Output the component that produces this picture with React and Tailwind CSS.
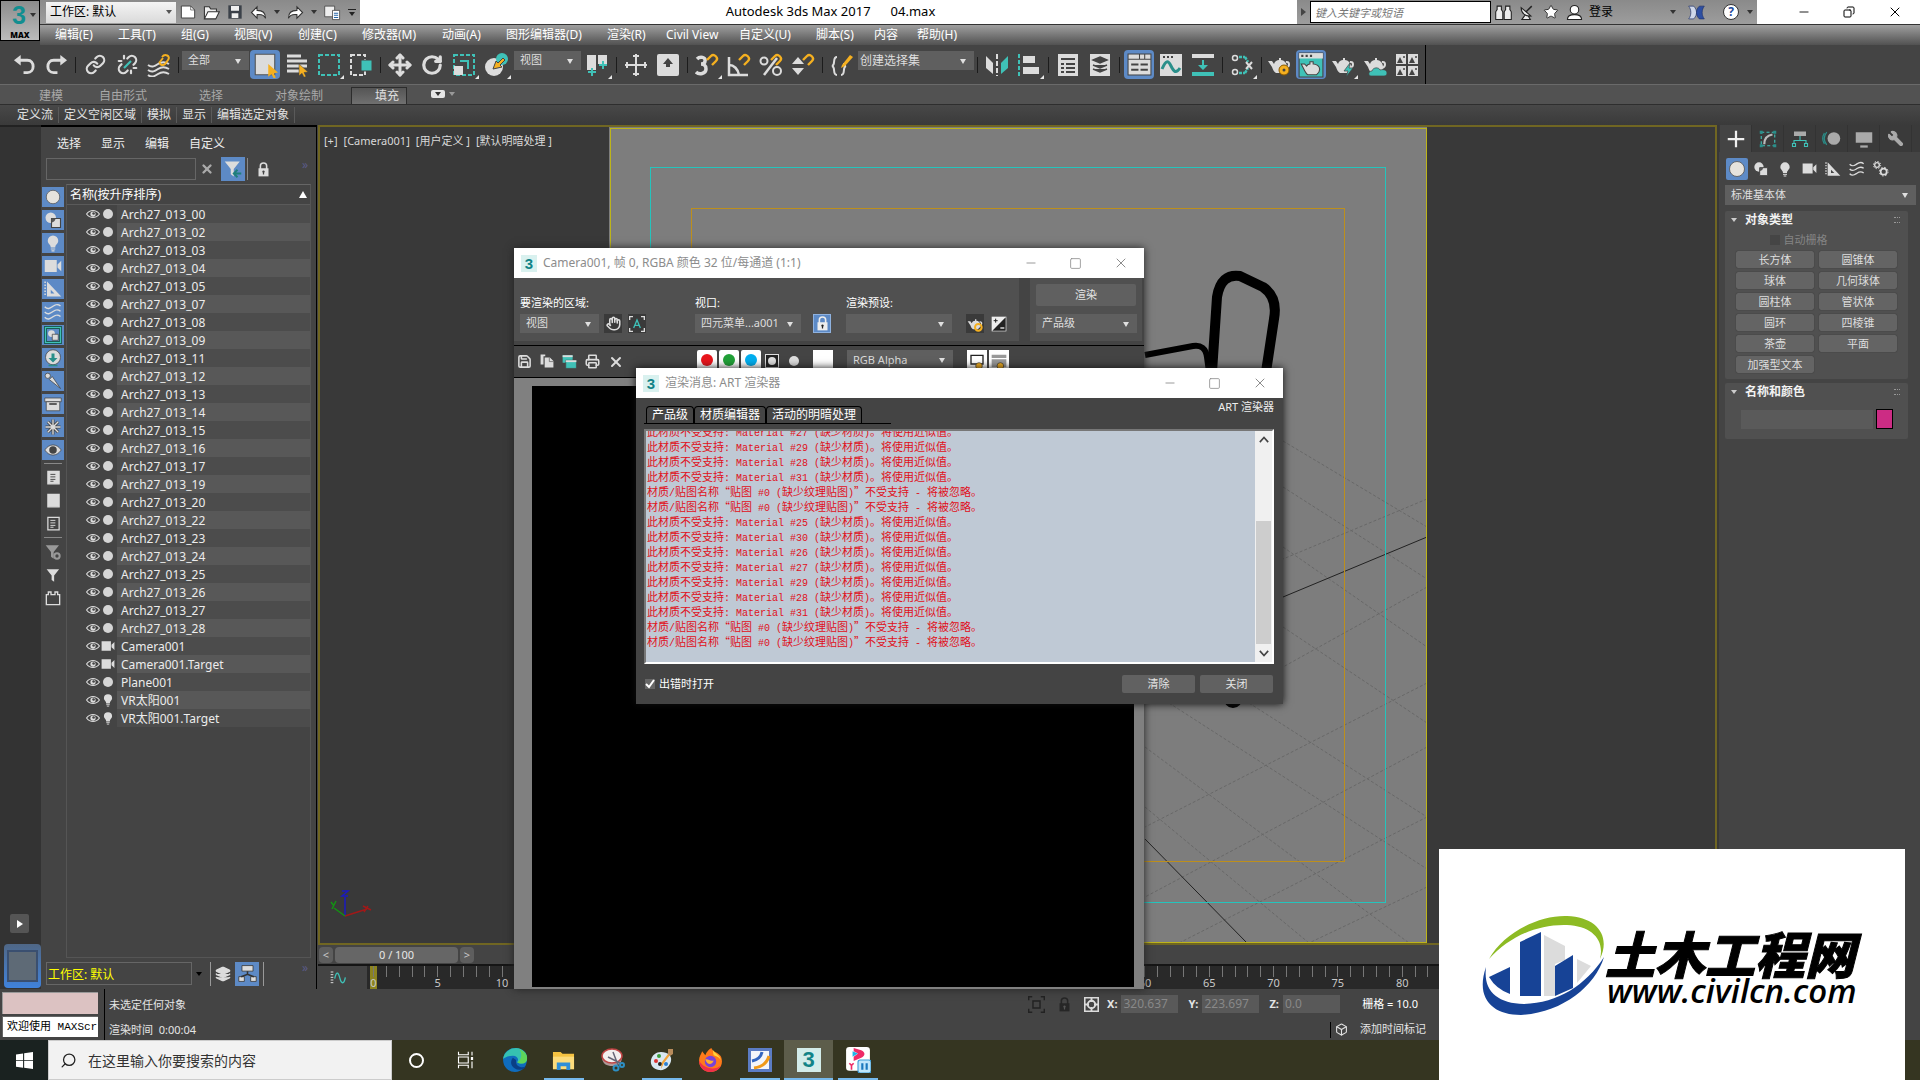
import React from 'react';
import { Link, Unlink, Move, RotateCw, Search, Star, Wrench, Layers, Hand, Save, Printer, Copy, X, Square, Minus, Box } from 'lucide-react';
import clsx from 'clsx';

const MENUS = [
  ['编辑(E)', 'w-[63px]'], ['工具(T)', 'w-[63px]'], ['组(G)', 'w-[53px]'], ['视图(V)', 'w-[64px]'],
  ['创建(C)', 'w-[64px]'], ['修改器(M)', 'w-[80px]'], ['动画(A)', 'w-[64px]'], ['图形编辑器(D)', 'w-[101px]'],
  ['渲染(R)', 'w-[59px]'], ['Civil View', 'w-[73px]'], ['自定义(U)', 'w-[77px]'], ['脚本(S)', 'w-[58px]'],
  ['内容', 'w-[43px]'], ['帮助(H)', 'w-[60px]'],
];

const OBJECTS = [
  ...['00', '02', '03', '04', '05', '07', '08', '09', '11', '12', '13', '14', '15', '16', '17', '19', '20', '22', '23', '24', '25', '26', '27', '28']
    .map((n) => ({ name: `Arch27_013_${n}`, kind: 'mesh' })),
  { name: 'Camera001', kind: 'camera' },
  { name: 'Camera001.Target', kind: 'camera' },
  { name: 'Plane001', kind: 'mesh' },
  { name: 'VR太阳001', kind: 'light' },
  { name: 'VR太阳001.Target', kind: 'light' },
];

const material = (n) => `此材质不受支持: Material #${n} (缺少材质)。将使用近似值。`;
const MAP = '材质/贴图名称“贴图 #0 (缺少纹理贴图)”不受支持 - 将被忽略。';
const LOG = [
  material(27), material(29), material(28), material(31), MAP, MAP,
  material(25), material(30), material(26), material(27), material(29), material(28), material(31), MAP, MAP,
];

const PRIMITIVES = ['长方体', '圆锥体', '球体', '几何球体', '圆柱体', '管状体', '圆环', '四棱锥', '茶壶', '平面', '加强型文本'];

const L = '#dcdcdc';
const T = '#3fc1b7';
const A = '#f5b020';

function Svg({ size = 24, children }) {
  return (
    <svg width={size} height={size} viewBox="0 0 24 24" fill="none" className="shrink-0">
      {children}
    </svg>
  );
}

/* ---------- small building blocks ---------- */

function Tool({ label, on, corner, children }) {
  return (
    <span className="flex w-8 shrink-0 justify-center">
      <button
        aria-label={label}
        className={clsx('relative flex h-[29px] w-[30px] items-center justify-center rounded-sm', on && 'bg-[#5d8ac6]')}
      >
        {children}
        {corner && <i className="absolute right-0 bottom-0 border-2 border-transparent border-r-[#e8e8e8] border-b-[#e8e8e8]" />}
      </button>
    </span>
  );
}

function Sep() {
  return (
    <span className="flex w-[7px] shrink-0 justify-center">
      <i className="h-4 w-px bg-[#1c1c1c]" />
    </span>
  );
}

function Select({ label, value, className, textClass = 'text-[11px]' }) {
  return (
    <span className={clsx('relative flex shrink-0 bg-[#5f5f5f]', className)}>
      <select aria-label={label} className={clsx('h-full w-full appearance-none bg-transparent px-1.5 text-[#dedede] outline-none', textClass)}>
        <option>{value}</option>
      </select>
      <i className="pointer-events-none absolute top-1/2 right-2 -mt-0.5 border-x-[3px] border-t-[5px] border-x-transparent border-t-[#e0e0e0]" />
    </span>
  );
}

function Down({ className = 'border-t-[#333]' }) {
  return <i className={clsx('shrink-0 border-x-[3px] border-t-[4px] border-x-transparent', className)} />;
}

function MaxMark() {
  return (
    <span className="flex h-[17px] w-4 items-center justify-center bg-[#d9f1ef] font-['Liberation_Sans',sans-serif] text-[15px] leading-none font-bold text-[#128387]">3</span>
  );
}

function WindowTitle({ title }) {
  return (
    <div className="flex h-[30px] items-center bg-white pl-[7px] text-[12px] text-[#8c8c8c]">
      <MaxMark />
      <span className="ml-1.5 flex-1 whitespace-nowrap">{title}</span>
      <button aria-label="最小化" className="flex w-[45px] justify-center"><Minus size={14} strokeWidth={1.5} /></button>
      <button aria-label="最大化" className="flex w-[45px] justify-center"><Square size={13} strokeWidth={1.5} /></button>
      <button aria-label="关闭窗口" className="flex w-[46px] justify-center"><X size={16} strokeWidth={1.5} /></button>
    </div>
  );
}

/* ---------- icons ---------- */

const Teapot = ({ children, size = 24 }) => (
  <Svg size={size}>
    <path d="M1 8h4l2 3c1-3 3-4 5-4V5h2v2c3 0 6 3 6 7 0 3-2 5-4 6H9c-2-1-3-3-4-6z" fill={L} />
    <path d="M19 9c4-1 4 5 0 6" stroke={L} strokeWidth="2" />
    {children}
  </Svg>
);

const Magnet = () => <path d="M12 7l4-4c3-3 8 2 5 5l-4 4" stroke={A} strokeWidth="2.4" />;

const Padlock = ({ size = 16, fill = L, hole = '#444' }) => (
  <Svg size={size}>
    <path d="M7 11V6c0-6 10-6 10 0v5" stroke={fill} strokeWidth="2.500" />
    <path d="M4 10h16v13H4z" fill={fill} />
    <path d="M12 13.500a2 2 0 0 1 1 3.700V20h-2v-2.800a2 2 0 0 1 1-3.700z" fill={hole} />
  </Svg>
);
const Shapes = ({ size = 18 }) => (
  <Svg size={size}>
    <circle cx="9" cy="9" r="7" fill={L} />
    <path d="M10 10h12v12H10z" fill={L} stroke="#444" strokeWidth="1.500" />
    <path d="M10 15.500V10h5.500a7 7 0 0 1-5.500 5.500z" fill="#555" />
  </Svg>
);
const Bulb = ({ size = 18 }) => (
  <Svg size={size}>
    <path d="M12 2a7 7 0 0 1 7 7c0 4-4 5-4 9H9c0-4-4-5-4-9a7 7 0 0 1 7-7z" fill={L} />
    <path d="M9 20h6M10 22.500h4" stroke={L} strokeWidth="1.500" />
  </Svg>
);
const Camera = ({ size = 18 }) => (
  <Svg size={size}>
    <path d="M1 4h16v16H1zM18 10l5-5v14l-5-5z" fill={L} />
  </Svg>
);
const Ruler = ({ size = 18 }) => (
  <Svg size={size}>
    <path fillRule="evenodd" d="M4 2l19 20H4zM9 13v5h5z" fill={L} />
    <path d="M1.500 2v20" stroke={L} strokeWidth="2" strokeDasharray="2 2" />
  </Svg>
);
const Waves = ({ size = 18 }) => (
  <Svg size={size}>
    {[5, 12, 19].map((y) => (
      <path key={y} d={`M1 ${y}c4 4 7 2 10 0s6-5 11-1`} stroke={L} strokeWidth="2" />
    ))}
  </Svg>
);
const Gears = ({ size = 18 }) => (
  <Svg size={size}>
    <circle cx="6" cy="6" r="3.500" stroke={L} strokeWidth="2" />
    <circle cx="6" cy="6" r="5.500" stroke={L} strokeWidth="1.500" strokeDasharray="2 2.300" />
    <circle cx="16" cy="16" r="4.500" stroke={L} strokeWidth="2.500" />
    <circle cx="16" cy="16" r="6.500" stroke={L} strokeWidth="1.500" strokeDasharray="2.500 2.600" />
  </Svg>
);
const Dot = ({ size = 18 }) => (
  <Svg size={size}>
    <circle cx="12" cy="12" r="9" fill="#e6e3dd" stroke="#555" />
  </Svg>
);
const Eye = ({ size = 14 }) => (
  <Svg size={size}>
    <path d="M1 12c6-8 16-8 22 0-6 8-16 8-22 0z" stroke={L} strokeWidth="2" />
    <circle cx="12" cy="12" r="4.500" fill={L} />
    <circle cx="13" cy="11" r="2.200" fill="#444" />
  </Svg>
);
const Funnel = ({ fill = L, size = 18, children }) => (
  <Svg size={size}>
    <path d="M1 2h20l-8 10v10l-4-3v-7z" fill={fill} />
    {children}
  </Svg>
);
const Page = ({ size = 18, filled = true, lines = true }) => (
  <Svg size={size}>
    <path d="M3 2h18v20H3z" fill={filled ? L : 'none'} stroke={L} strokeWidth="2" />
    {lines && <path d="M7 7h8M7 11h8M7 15h8M7 18h5" stroke={filled ? '#444' : L} strokeWidth="1.500" />}
  </Svg>
);

/* ---------- header ---------- */

function TitleBar() {
  return (
    <div className="flex h-6 bg-white">
      <div className="flex w-80 shrink-0 items-center bg-linear-to-b from-[#8a8a8a] to-[#9d9d9d] pl-1.5">
        <span className="relative mr-1 flex h-[21px] w-[130px] bg-linear-to-b from-[#f4f4f4] to-[#dadada]">
          <select aria-label="工作区" className="w-full appearance-none px-1 text-[12px] text-black outline-none">
            <option>工作区: 默认</option>
          </select>
          <Down className="pointer-events-none absolute top-2 right-1 border-t-[#555]" />
        </span>
        <div className="flex flex-1 items-center justify-between pr-1">
          <Svg size={16}><path d="M2 3h14l6 6v12H2z" fill="#fff" stroke="#444" strokeWidth="1.500" /><path d="M16 3v6h6" stroke="#444" /></Svg>
          <Svg size={17}><path d="M2 21V4h7l2 3h8v4" fill="#eee" stroke="#333" strokeWidth="1.500" /><path d="M2 21l5-10h16l-5 10z" fill="#fff" stroke="#333" strokeWidth="1.500" /></Svg>
          <Svg size={16}><path d="M2 2h20v20H2z" fill="#3b4149" /><path d="M6 3h12v7H6zM7 14h10v7H7z" fill="#f0f0f0" /></Svg>
          <Svg size={17}><path d="M10 4v5c8 0 12 3 12 11-2-4-5-6-12-5v5L2 12z" fill="#fff" stroke="#333" strokeWidth="1.500" /></Svg>
          <Down />
          <Svg size={17}><path d="M14 4v5C6 9 2 12 2 20c2-4 5-6 12-5v5l8-8z" fill="#fff" stroke="#333" strokeWidth="1.500" /></Svg>
          <Down />
          <Svg size={17}><path d="M1 3h14v15H1z" fill="#eee" stroke="#333" /><path d="M12 9h10v13H12z" fill="#fff" stroke="#333" /><path d="M14 13h6M14 16h6M14 19h6" stroke="#2566a8" strokeWidth="1.500" /></Svg>
          <span className="flex flex-col items-center gap-0.5"><i className="h-px w-2 bg-[#222]" /><Down className="border-t-[#222]" /></span>
        </div>
      </div>
      <div className="flex min-w-0 flex-1 items-center justify-center gap-5 pl-1 text-[13px] whitespace-nowrap text-black">
        <span>Autodesk 3ds Max 2017</span>
        <span>04.max</span>
      </div>
      <div className="flex w-[460px] shrink-0 items-center bg-linear-to-b from-[#8a8a8a] to-[#9d9d9d]">
        <i className="mx-1 border-y-4 border-l-[5px] border-y-transparent border-l-[#444]" />
        <input
          aria-label="搜索"
          placeholder="键入关键字或短语"
          className="h-[22px] w-[181px] border border-black bg-white px-1 text-[11px] text-black italic outline-none placeholder:text-[#777]"
        />
        <div className="ml-1 flex items-center gap-[7px]">
          <Svg size={17}><path d="M3 3h6v5l2 3v11H1V11l2-3zM15 3h6v5l2 3v11H13V11l2-3z" fill="#eee" stroke="#222" strokeWidth="1.500" /></Svg>
          <Svg size={17}><path d="M3 5c0 8 6 13 14 12zM9 15l-5 7h12l-3-5" fill="#eee" stroke="#222" strokeWidth="1.500" /><path d="M10 11l8-8" stroke="#222" strokeWidth="2" /></Svg>
          <Star size={16} fill="#fff" color="#333" strokeWidth={1.5} />
          <Svg size={17}><circle cx="12" cy="8" r="6" fill="#fff" stroke="#222" strokeWidth="1.500" /><path d="M2 22c0-5 4-7 10-7s10 2 10 7z" fill="#fff" stroke="#222" strokeWidth="1.500" /></Svg>
        </div>
        <button className="ml-1.5 text-[12px] text-black">登录</button>
        <span className="flex-1" />
        <Down />
        <span className="ml-3">
          <Svg size={17}><path d="M1 3h7c3 3 4 6 4 9s-1 6-4 9H1c4-5 4-13 0-18z" fill="#cfd8ea" stroke="#22356f" /><path d="M23 3h-7c-3 3-4 6-4 9s1 6 4 9h7c-4-5-4-13 0-18z" fill="#2d4fa3" stroke="#22356f" /></Svg>
        </span>
        <button aria-label="帮助" className="ml-[18px] flex h-4 w-4 items-center justify-center rounded-full border border-[#333] bg-white text-[12px] leading-none font-bold text-[#224a9c]">?</button>
        <Down className="mr-1 ml-2 border-t-[#333]" />
      </div>
      <div className="flex w-[163px] shrink-0 items-center pl-6 text-black">
        <button aria-label="最小化" className="flex w-[45px] justify-center"><Minus size={14} strokeWidth={1.5} /></button>
        <button aria-label="还原" className="flex w-[46px] justify-center"><Copy size={12} strokeWidth={2} className="-scale-x-100" /></button>
        <button aria-label="退出" className="flex w-[46px] justify-center"><X size={16} strokeWidth={1.5} /></button>
      </div>
    </div>
  );
}

function MainToolbar() {
  return (
    <div className="bg-[#444]">
      <div className="flex h-[39px] w-[1426px] items-center border-r border-black pl-2">
        <Tool label="撤消">
          <Svg size={23}><path d="M8 2v11L1 7.500z" fill={L} /><path d="M7 7.500h8c8 0 8 13 0 13h-4" stroke={L} strokeWidth="3" /></Svg>
        </Tool>
        <Tool label="重做">
          <Svg size={23}><path d="M16 2v11l7-5.500z" fill={L} /><path d="M17 7.500H9c-8 0-8 13 0 13h4" stroke={L} strokeWidth="3" /></Svg>
        </Tool>
        <Sep />
        <Tool label="选择并链接"><Link size={21} color={L} strokeWidth={2.5} /></Tool>
        <Tool label="取消链接">
          <span className="relative flex">
            <Unlink size={21} color={L} strokeWidth={2.5} />
            <svg viewBox="0 0 24 24" className="absolute inset-0" fill="none"><path d="M8 16l8-8" stroke={T} strokeWidth="2.500" /></svg>
          </span>
        </Tool>
        <Tool label="绑定到空间扭曲">
          <Svg>
            {[12, 17, 22].map((y) => <path key={y} d={`M1 ${y}c4 3 7 1 10-1s6-3 11 0`} stroke={L} strokeWidth="2" />)}
            <path d="M12 10l4-5M15 4c3-4 9-1 6 3l-3 4c-2 2-5 1-5-1" stroke={A} strokeWidth="2" />
          </Svg>
        </Tool>
        <Sep />
        <Select label="选择过滤器" value="全部" className="mb-2 h-[19px] w-[67px]" />
        <Tool label="选择对象" on>
          <Svg size={26}><path d="M3 2h18v19H3z" fill={L} stroke="#555" /><path d="M15 11l9 8-4 .5 2 4-2 .8-2-4-3 2.500z" fill={A} /></Svg>
        </Tool>
        <Tool label="按名称选择">
          <Svg><path d="M2 3h14M2 8h20M2 13h20M2 18h12" stroke={L} strokeWidth="3" /><path d="M14 11l9 8-4 .5 2 4-2 .8-2-4-3 2.500z" fill={A} stroke="#444" strokeWidth=".5" /></Svg>
        </Tool>
        <Tool label="矩形选择区域" corner>
          <Svg><path d="M2 2h20v20H2z" stroke={T} strokeWidth="2" strokeDasharray="4 2" /></Svg>
        </Tool>
        <Tool label="窗口/交叉">
          <Svg><path d="M2 2h14v20H2z" stroke={L} strokeWidth="2" strokeDasharray="4 2" /><path d="M12 7h11v11H12z" fill={T} stroke="#444" /></Svg>
        </Tool>
        <Sep />
        <Tool label="选择并移动"><Move size={24} color={L} strokeWidth={3} /></Tool>
        <Tool label="选择并旋转"><RotateCw size={22} color={L} strokeWidth={3.5} /></Tool>
        <Tool label="选择并缩放" corner>
          <Svg><path d="M2 2h20v20H2z" stroke={T} strokeWidth="2" strokeDasharray="4 2" /><path d="M2 13h9v9H2z" fill={L} /><path d="M8 8h8v8" stroke={T} strokeWidth="2" /></Svg>
        </Tool>
        <Tool label="选择并放置" corner>
          <Svg><circle cx="10" cy="14" r="9" fill={L} /><circle cx="18" cy="6" r="6" fill={T} /><path d="M9 16l3-8 2 2 5-5 2 2-5 5 2 2z" fill={A} stroke="#444" /></Svg>
        </Tool>
        <Select label="参考坐标系" value="视图" className="mb-2 ml-0.5 h-[19px] w-[67px]" />
        <Tool label="使用轴点中心" corner>
          <Svg><path d="M2 2h9v15H2zM13 2h9v9h-9z" fill={L} /><path d="M7 15v8M3 19h8M18 8v8M14 12h8" stroke={T} strokeWidth="2" /></Svg>
        </Tool>
        <Sep />
        <Tool label="选择并操纵">
          <Svg><path d="M12 1v22M1 12h22M9 3h6M9 21h6M3 9v6M21 9v6" stroke={L} strokeWidth="2" /></Svg>
        </Tool>
        <Tool label="键盘快捷键覆盖">
          <Svg><rect x="1" y="1" width="22" height="22" rx="2" fill={L} /><path d="M12 5l-5 6h3v3h4v-3h3z" fill="#444" /></Svg>
        </Tool>
        <Sep />
        <Tool label="捕捉开关" corner>
          <Svg><path d="M2 6c3-3 9-2 8 2 0 3-3 3-4 3 2 0 5 1 5 5 0 5-7 6-10 3" stroke={L} strokeWidth="3.500" /><Magnet /></Svg>
        </Tool>
        <Tool label="角度捕捉">
          <Svg><path d="M2 4v18h19M2 12c5 0 9 4 10 10" stroke={L} strokeWidth="2.500" /><Magnet /></Svg>
        </Tool>
        <Tool label="百分比捕捉">
          <Svg><circle cx="5" cy="8" r="3.500" stroke={L} strokeWidth="2" /><circle cx="18" cy="18" r="4" stroke={L} strokeWidth="2" /><path d="M18 5L5 22" stroke={L} strokeWidth="2.500" /><Magnet /></Svg>
        </Tool>
        <Tool label="微调器捕捉">
          <Svg><path d="M1 11l6-7 6 7zM1 15h12l-6 7z" fill={L} /><Magnet /></Svg>
        </Tool>
        <Sep />
        <Tool label="编辑命名选择集">
          <Svg><path d="M7 4c-5 0-1 8-5 9 4 1 0 9 5 9M11 22c5 0 1-8 5-9-2 0-2-2-2-3" stroke={L} strokeWidth="2" /><path d="M12 12l8-10 3 2-8 9-4 2z" fill={A} /></Svg>
        </Tool>
        <Select label="命名选择集" value="创建选择集" className="mb-2 h-[19px] w-[116px]" textClass="text-[12px] pl-0.5" />
        <Sep />
        <Tool label="镜像">
          <Svg><path d="M1 3l7 7v11l-7-6z" fill={L} /><path d="M23 3l-7 7v11l7-6z" fill={T} /><path d="M12 1v22" stroke={L} strokeWidth="2" strokeDasharray="5 2" /></Svg>
        </Tool>
        <Tool label="对齐" corner>
          <Svg><path d="M2 1v22" stroke={T} strokeWidth="2" strokeDasharray="4 2" /><path d="M6 3h12v7H6zM6 14h16v7H6z" fill={L} /></Svg>
        </Tool>
        <Sep />
        <Tool label="场景资源管理器">
          <Svg><path d="M2 1h20v22H2z" fill={L} /><path d="M5 6h14M5 11h3M10 11h9M5 15h3M10 15h9M5 19h3M10 19h9" stroke="#444" strokeWidth="2" /></Svg>
        </Tool>
        <Tool label="层资源管理器">
          <Svg><path d="M2 1h20v22H2z" fill={L} /><path d="M12 4l7 3-7 3-7-3zM5 12l7 3 7-3M5 16l7 3 7-3" fill="#444" stroke="#444" strokeWidth="1.500" /></Svg>
        </Tool>
        <Sep />
        <Tool label="切换功能区" on>
          <Svg size={25}><path d="M1 2h22v20H1z" fill={L} stroke="#444" /><path d="M1 7h22M12 2v5M17 2v5" stroke="#444" /><path d="M4 12h7M4 17h7M13 12h7M13 17h7" stroke="#444" strokeWidth="2" /></Svg>
        </Tool>
        <Tool label="曲线编辑器">
          <Svg><path d="M1 1h22v22H1z" fill={L} /><path d="M4 4h2M8 4h2M12 4h2" stroke="#444" strokeWidth="2" /><path d="M3 16c4-9 6-9 9-3s5 8 9 2" stroke="#2a8f8a" strokeWidth="3" /></Svg>
        </Tool>
        <Tool label="图解视图">
          <Svg><path d="M1 1h22v4H1z" fill={L} /><path d="M1 19h22v4H1z" fill={T} /><path d="M11 7h2v5h4l-5 5-5-5h4z" fill={T} /></Svg>
        </Tool>
        <Sep />
        <Tool label="材质编辑器" corner>
          <Svg><circle cx="5" cy="5" r="2.500" stroke={L} strokeWidth="1.500" /><circle cx="5" cy="19" r="2.500" stroke={L} strokeWidth="1.500" /><path d="M9 4h6M9 20h6M15 4l3 5M15 20l3-5" stroke={T} strokeWidth="2.500" strokeDasharray="3 1" /><path d="M16 9l6 7M22 9l-6 7" stroke={L} strokeWidth="2" /></Svg>
        </Tool>
        <Sep />
        <div className="-ml-0.5 flex">
          <Tool label="渲染设置">
            <Teapot><circle cx="17" cy="17" r="5" fill={A} stroke="#8a5a00" /><circle cx="17" cy="17" r="1.500" fill="#444" /></Teapot>
          </Tool>
          <Tool label="渲染帧窗口" on>
            <Svg size={26}><path d="M1 1h22v22H1z" fill={T} stroke="#444" /><path d="M1 1h22v5H1z" fill={L} /><path d="M3 3.500h2M7 3.500h2M11 3.500h2" stroke="#444" strokeWidth="2" /><path d="M3 11h3l2 2c1-2 2-2 3-2V9h3v2c3 0 6 2 6 5s-2 4-3 5H9c-2-1-3-4-6-10z" fill={L} stroke="#444" /></Svg>
          </Tool>
          <Tool label="渲染产品" corner>
            <Teapot><path d="M19 10l-6 8h4l-2 6 7-9h-4z" fill={T} stroke="#444" strokeWidth=".7" /></Teapot>
          </Tool>
          <Tool label="在云中渲染">
            <Teapot><path d="M8 23c-3 0-3-5 1-5 1-4 7-4 8-1 4-1 7 0 7 3 0 2-1 3-3 3z" fill={T} stroke="#444" strokeWidth=".7" /></Teapot>
          </Tool>
          <Tool label="渲染库">
            <Svg>
              {[[1, 1], [13, 1], [1, 13], [13, 13]].map(([x, y]) => (
                <g key={`${x}-${y}`}><path d={`M${x} ${y}h10v10h-10z`} fill={L} /><path d={`M${x + 1} ${y + 9}l3-6 3 6z`} fill="#444" /><circle cx={x + 8} cy={y + 3} r="1" fill="#444" /></g>
              ))}
            </Svg>
          </Tool>
        </div>
      </div>
    </div>
  );
}

function Ribbon() {
  return (
    <div className="border-t border-[#6a6a6a] bg-[#444]">
      <div className="flex h-[19px] items-end bg-[#525252] pl-[39px] text-[12px] leading-4 text-[#a8a8a8]">
        <button className="mr-9">建模</button>
        <button className="mr-[52px]">自由形式</button>
        <button className="mr-[52px]">选择</button>
        <button className="mr-7">对象绘制</button>
        <button className="h-[17px] w-14 border border-b-0 border-[#2c2c2c] bg-linear-to-b from-[#555] to-[#707070] pl-4 text-[#e0e0e0]">填充</button>
        <span className="mb-1.5 ml-6 flex h-2 w-3.5 items-center justify-center rounded-xs bg-[#e6e6e6]"><Down /></span>
        <Down className="mb-2 ml-1 border-t-[#999]" />
      </div>
      <div className="flex h-[21px] items-center border-t border-[#2e2e2e] bg-linear-to-b from-[#484848] to-[#3a3a3a] pl-3 text-[12px] leading-4 text-[#e2e2e2]">
        {['定义流', '定义空闲区域', '模拟', '显示', '编辑选定对象'].map((t) => (
          <button key={t} className="border-r border-[#5a5a5a] px-[5px]">{t}</button>
        ))}
      </div>
    </div>
  );
}

/* ---------- scene explorer ---------- */

const FILTERS = [
  ['几何体', <Dot />],
  ['图形', <Shapes />],
  ['灯光', <Bulb />],
  ['摄影机', <Camera />],
  ['辅助对象', <Ruler />],
  ['空间扭曲', <Waves />],
  ['组', <Svg size={18}><path d="M2 2h20v20H2z" stroke="#1b5c58" strokeWidth="4" /><path d="M2 2h20v20H2z" stroke={T} strokeWidth="1.500" /><circle cx="10" cy="10" r="4.500" fill={L} /><path d="M11 11h8v8h-8z" fill={L} stroke="#444" /></Svg>],
  ['外部参照', <Svg size={18}><circle cx="12" cy="11" r="10" fill={L} stroke="#444" /><path d="M10 6h4v6h4l-6 6-6-6h4z" fill="#2a8f8a" /><path d="M6 22h12" stroke="#2a8f8a" strokeWidth="2" /></Svg>],
  ['骨骼', <Svg size={18}><circle cx="5" cy="5" r="3.500" fill={L} stroke="#444" /><path d="M7 10l4-4 11 16z" fill={L} stroke="#444" /></Svg>],
  ['容器', <Svg size={18}><path d="M1 4h22v5H1z" fill={L} stroke="#444" /><path d="M3 9h18v12H3z" fill={L} stroke="#444" /><path d="M7 12h10" stroke="#333" strokeWidth="2" /></Svg>],
  ['冻结', <Svg size={18}><path d="M12 2v20M2 12h20M5 5l14 14M19 5L5 19" stroke="#444" strokeWidth="4" /><path d="M12 2v20M2 12h20M5 5l14 14M19 5L5 19" stroke="#ddd" strokeWidth="1.800" /></Svg>],
  ['隐藏', <Svg size={18}><path d="M1 12c6-9 16-9 22 0-6 9-16 9-22 0z" fill={L} stroke="#444" /><circle cx="12" cy="12" r="5" fill="#444" /></Svg>],
];

function SceneExplorer() {
  return (
    <aside className="flex w-[276px] shrink-0 flex-col border-t-2 border-r border-black bg-[#444] text-[12px] text-[#ececec]">
      <div className="flex h-[29px] items-center gap-5 pt-1 pl-4">
        {['选择', '显示', '编辑', '自定义'].map((t) => <button key={t}>{t}</button>)}
      </div>
      <div className="mb-0.5 flex h-[26px] items-center pl-[5px]">
        <input aria-label="查找" className="h-[22px] w-[150px] border border-[#666] bg-transparent px-1 outline-none" />
        <button aria-label="清除查找" className="ml-1"><X size={14} color="#aaa" strokeWidth={4} /></button>
        <button aria-label="过滤" className="ml-[7px] flex h-6 w-6 items-center justify-center bg-[#5d8ac6]">
          <Funnel><path d="M23 18h-9M18 13l-5 5 5 5" stroke="#1f7f7a" strokeWidth="2.500" /></Funnel>
        </button>
        <i className="mr-2 ml-0.5 h-[22px] w-px bg-[#888]" />
        <Padlock size={15} />
        <span className="mb-2 ml-auto pr-2 text-[#5b5b88]">»</span>
      </div>
      <div className="flex min-h-0 flex-1">
        <div className="flex w-[25px] shrink-0 flex-col items-center gap-[3px] pt-[3px] pr-px">
          {FILTERS.map(([label, icon]) => (
            <button key={label} aria-label={label} className="flex h-5 w-[22px] items-center justify-center bg-[#5d8ac6]">{icon}</button>
          ))}
          <i className="h-px w-[18px] bg-[#888]" />
          <button aria-label="全部" className="flex h-5 items-center"><Page size={15} /></button>
          <button aria-label="无" className="flex h-5 items-center"><Page size={15} lines={false} /></button>
          <button aria-label="反转" className="flex h-5 items-center"><Page size={15} filled={false} /></button>
          <i className="my-px h-px w-[18px] bg-[#888]" />
          <button aria-label="过滤器设置" className="flex h-5 items-center"><Funnel size={16} fill="#999"><circle cx="18" cy="18" r="4" stroke="#999" strokeWidth="3" /></Funnel></button>
          <button aria-label="组合过滤器" className="flex h-5 items-center"><Funnel size={15} /></button>
          <button aria-label="扩展" className="flex h-5 items-center">
            <Svg size={16}><path d="M2 22V7h3V3h4v4h6V3h4v4h3v15z" stroke={L} strokeWidth="2" /></Svg>
          </button>
        </div>
        <div className="mr-[5px] flex min-w-0 flex-1 flex-col border border-[#555] border-t-[#666]">
          <div className="flex h-5 items-center justify-between border-b border-[#5a5a5a] px-[3px] text-white">
            <span>名称(按升序排序)</span>
            <i className="border-x-4 border-b-[7px] border-x-transparent border-b-white" />
          </div>
          <ul className="text-[12px]">
            {OBJECTS.map((o, i) => (
              <li key={o.name} className="flex h-[18px] items-center">
                <span className="flex w-[50px] shrink-0 items-center justify-end gap-px pr-0.5">
                  <Eye size={14} />
                  <span className="flex w-3.5 justify-center">
                    {o.kind === 'mesh' && <i className="h-2.5 w-2.5 rounded-full bg-[#d5d5d5]" />}
                    {o.kind === 'camera' && <Camera size={14} />}
                    {o.kind === 'light' && <Bulb size={14} />}
                  </span>
                </span>
                <span className={clsx('h-full min-w-0 flex-1 pl-1 leading-[19px]', i % 2 ? 'bg-[#585858]' : 'bg-[#4c4c4c]')}>{o.name}</span>
              </li>
            ))}
          </ul>
        </div>
      </div>
      <div className="flex h-[31px] items-center pl-[5px]">
        <input aria-label="工作区名称" defaultValue="工作区: 默认" className="h-[23px] w-[146px] border border-[#666] bg-transparent px-px text-[12px] text-[#ffff00] outline-none" />
        <Down className="mx-1 border-t-black" />
        <i className="mr-1 ml-1 h-6 w-px bg-[#999]" />
        <Layers size={16} color={L} fill={L} />
        <button aria-label="层次" className="ml-1 flex h-6 w-6 items-center justify-center bg-[#5d8ac6]">
          <Svg size={19}><path d="M5 2h14v7H5zM1 16h7v6H1zM16 16h7v6h-7z" fill={L} stroke="#333" /><path d="M12 9v4M4 16l8-3 8 3" stroke="#333" strokeWidth="2" /></Svg>
        </button>
        <i className="ml-1 h-6 w-px bg-[#999]" />
        <span className="mb-3 ml-auto pr-2 text-[#5b5b88]">»</span>
      </div>
    </aside>
  );
}

/* ---------- viewport ---------- */

function Viewport() {
  return (
    <div className="relative flex min-h-0 flex-1 justify-center border-2 border-[#706622] bg-[#393939]">
      <span className="absolute top-1.5 left-1 flex gap-1.5 text-[11px] text-[#d8d8d8]">
        <span>[+]</span><span>[Camera001]</span><span>[用户定义 ]</span><span>[默认明暗处理 ]</span>
      </span>
      <svg viewBox="0 0 818 816" className="block aspect-[818/816] h-full" fill="none">
        <rect width="818" height="816" fill="#7d7d7d" />
        <g stroke="#686868" strokeDasharray="3 2">
          <path d="M674 314L818 400M674 360L818 452M674 420L818 520M674 500L818 596M640 576L818 690M560 576L818 742M536 620L800 816M536 680L700 816" />
          <path d="M818 460L674 540M818 556L536 700M818 620L536 770M818 690L570 816M818 760L700 816M818 372L674 432" />
        </g>
        <path d="M674 470L818 410" stroke="#222" />
        <path d="M536 712L638 816" stroke="#222" />
        <path d="M603 245L608 170Q612 146 631 149L654 160Q669 170 665 192L657 245" stroke="#000" strokeWidth="10" />
        <path d="M536 228L584 219Q596 217 598 230L600 245" stroke="#000" strokeWidth="6" />
        <path d="M618 576q6 6 12 0" stroke="#000" strokeWidth="4" />
        <g shapeRendering="crispEdges">
          <rect x="41" y="40" width="735" height="735" stroke="#25c4bd" />
          <rect x="82" y="81" width="653" height="653" stroke="#bd8f1c" />
          <rect x="1" y="1" width="816" height="814" stroke="#bdb41a" />
        </g>
      </svg>
      <svg width="50" height="34" viewBox="0 0 50 34" className="absolute bottom-5 left-2" fill="none">
        <path d="M17 27V8M14 2h6l-6 5h6" stroke="#1a1ac0" strokeWidth="1.500" />
        <path d="M17 27l22-7M35 17l8 4M36 23l4-6" stroke="#a01818" strokeWidth="1.500" />
        <path d="M17 27L6 19M3 13l3 4M8 12l-4 8" stroke="#149014" strokeWidth="1.500" />
      </svg>
    </div>
  );
}

function Timeline() {
  const frames = Array.from({ length: 101 }, (_, i) => i);
  return (
    <div className="shrink-0 bg-[#444] text-[11px] text-[#c8c8c8]">
      <div className="flex h-[19px] items-center gap-0.5 pl-px">
        <button className="h-4 w-3.5 rounded-sm bg-[#5e5e5e] leading-4">&lt;</button>
        <button className="h-4 w-[123px] rounded-sm bg-[#666] leading-4 text-[#e6e6e6]">0 / 100</button>
        <button className="h-4 w-3.5 rounded-sm bg-[#5e5e5e] leading-4">&gt;</button>
      </div>
      <div className="flex h-[25px] border-t-2 border-[#151515]">
        <span className="flex w-[49px] shrink-0 items-center justify-center bg-[#444] pr-2.5">
          <Svg size={16}><path d="M1 3h4M1 7h4M1 11h4M1 15h4M1 19h4" stroke={L} strokeWidth="1.500" /><path d="M7 13c3-14 6-8 8 0s6 9 8-2" stroke={T} strokeWidth="2" /></Svg>
        </span>
        <div className="flex min-w-0 flex-1 bg-[#292929] pr-[51px]">
          {frames.map((f) => (
            <span key={f} className="flex h-full min-w-0 flex-1 justify-center">
              <span className={clsx('flex h-full w-[7px] flex-col items-center whitespace-nowrap', f === 0 && 'bg-[#8c8420]')}>
                <i className="h-[11px] w-px shrink-0 bg-[#777]" />
                {f % 5 === 0 && f <= 80 && <span className="flex w-0 justify-center leading-3">{f}</span>}
              </span>
            </span>
          ))}
        </div>
      </div>
    </div>
  );
}

/* ---------- command panel ---------- */

function Rollout({ title, className, children }) {
  return (
    <section className={clsx('mr-3 ml-1.5 rounded-xs bg-[#505050]', className)}>
      <h2 className="flex h-[18px] items-center text-[12px] font-bold text-[#f2f2f2]">
        <Down className="mr-2 ml-1.5 border-t-[#ccc]" />
        {title}
        <i className="mr-2 ml-auto h-1.5 w-1.5 border-y border-dotted border-[#999]" />
      </h2>
      {children}
    </section>
  );
}

function CommandPanel() {
  const tabs = [
    ['创建', <Svg size={18}><path d="M12 1v22M1 12h22" stroke="#f0f0f0" strokeWidth="3" /></Svg>],
    ['修改', <Svg size={18}><path d="M3 3h18v18H3z" stroke={T} strokeWidth="1.500" strokeDasharray="4 3" /><path d="M1 1h4v4H1zM19 1h4v4h-4zM1 19h4v4H1zM19 19h4v4h-4z" fill="#2a8f8a" /><path d="M7 19c0-8 4-12 11-13" stroke="#bbb" strokeWidth="3" /></Svg>],
    ['层次', <Svg size={18}><path d="M4 2h16v6H4z" fill="#aaa" /><path d="M12 8v6M4 18v-4h16v4" stroke={T} strokeWidth="1.500" /><path d="M2 18h4v4H2zM18 18h4v4h-4z" stroke={T} strokeWidth="1.500" /></Svg>],
    ['运动', <Svg size={19}><circle cx="15" cy="12" r="8" fill="#aaa" /><path d="M6 4c-4 5-4 11 0 16M3 5c-3 5-3 9 0 14" stroke="#2a8f8a" strokeWidth="1.500" /></Svg>],
    ['显示面板', <Svg size={18}><path d="M1 3h22v14H1z" fill="#aaa" /><path d="M7 22h10" stroke="#aaa" strokeWidth="3" /></Svg>],
    ['实用程序', <Wrench size={17} color="#aaa" fill="#aaa" strokeWidth={1.5} className="-scale-x-100" />],
  ];
  const cats = [
    ['几何体', <Dot size={20} />], ['图形', <Shapes size={16} />], ['灯光', <Bulb size={16} />], ['摄影机', <Camera size={15} />],
    ['辅助对象', <Ruler size={16} />], ['空间扭曲', <Waves size={16} />], ['系统', <Gears size={16} />],
  ];
  return (
    <aside className="flex w-[203px] shrink-0 flex-col border-l-2 border-[#383838] bg-[#444] text-[#dedede]">
      <div className="flex h-[27px] bg-[#3a3a3a] pl-px">
        {tabs.map(([label, icon], i) => (
          <button key={label} aria-label={label} className={clsx('flex w-8 items-center justify-center border-r border-[#333]', i === 0 && 'bg-[#444]')}>{icon}</button>
        ))}
      </div>
      <div className="flex h-[33px] items-center pl-[7px]">
        {cats.map(([label, icon], i) => (
          <button key={label} aria-label={label} className={clsx('mr-0.5 flex h-[22px] w-[22px] items-center justify-center rounded-xs', i === 0 && 'bg-[#5d8ac6]')}>{icon}</button>
        ))}
      </div>
      <Select label="对象类别" value="标准基本体" className="mr-1 mb-1.5 ml-1.5 h-5" />
      <Rollout title="对象类型" className="mb-1 pb-1.5">
        <label className="flex h-[22px] items-center justify-center gap-1 pr-9 text-[11px] text-[#848484]">
          <input type="checkbox" disabled className="h-2.5 w-2.5 appearance-none bg-[#454545]" />
          自动栅格
        </label>
        <div className="grid grid-cols-2 gap-x-[5px] gap-y-1 px-[11px]">
          {PRIMITIVES.map((p) => (
            <button key={p} className="h-[17px] rounded-xs bg-[#646464] text-[11px] leading-[17px] shadow-[0_0_1px_#222]">{p}</button>
          ))}
        </div>
      </Rollout>
      <Rollout title="名称和颜色" className="pb-2.5">
        <div className="flex items-center gap-[3px] pt-2 pr-[15px] pl-4">
          <input aria-label="对象名称" className="h-[19px] min-w-0 flex-1 bg-[#5a5a5a] px-1 text-[11px] outline-none" />
          <button aria-label="对象颜色" className="h-5 w-[17px] border border-black bg-[#cc2c84]" />
        </div>
      </Rollout>
    </aside>
  );
}

/* ---------- floating windows ---------- */

function RenderWindow() {
  const channel = 'flex h-full w-5 items-start justify-center rounded-t-xs bg-white pt-1';
  return (
    <section className="absolute top-[248px] left-[514px] flex h-[741px] w-[630px] flex-col bg-[#444] shadow-[0_0_8px_#222]">
      <WindowTitle title="Camera001, 帧 0, RGBA 颜色 32 位/每通道 (1:1)" />
      <div className="flex h-[68px] gap-[11px] border-b border-black pb-1 text-[11px] text-[#e4e4e4]">
        <div className="flex flex-1 items-end bg-[#505050] pb-2 pl-1.5">
          <div className="w-[82px]">
            <p className="mb-[3px] whitespace-nowrap text-white">要渲染的区域:</p>
            <Select label="要渲染的区域" value="视图" className="h-[19px] w-[79px]" />
          </div>
          <button aria-label="编辑区域" className="ml-0.5 flex h-[19px] w-[18px] items-center justify-center bg-[#3a3a3a]"><Hand size={15} color={L} strokeWidth={2.5} /></button>
          <button aria-label="自动区域" className="ml-1.5 flex h-[19px] w-[18px] items-center justify-center bg-[#3a3a3a]">
            <Svg size={16}><path d="M1 6V1h5M18 1h5v5M23 18v5h-5M6 23H1v-5" stroke={L} strokeWidth="2" /><path d="M7 18l5-12 5 12M9 14h6" stroke={T} strokeWidth="2" /></Svg>
          </button>
          <div className="ml-[49px] w-[106px]">
            <p className="mb-[3px] text-white">视口:</p>
            <Select label="视口" value="四元菜单...a001" className="h-[19px] w-[106px]" />
          </div>
          <button aria-label="锁定到视口" className="ml-3 flex h-[19px] w-[18px] items-center justify-center border border-[#8fb2df] bg-[#5d8ac6]"><Padlock size={15} fill="#eee" hole="#222" /></button>
          <div className="ml-[15px] w-[106px]">
            <p className="mb-[3px] text-white">渲染预设:</p>
            <Select label="渲染预设" value="" className="h-[19px] w-[106px]" />
          </div>
          <span className="ml-3.5 flex h-[19px] w-[18px] items-center justify-center bg-[#3a3a3a]"><Teapot size={16}><circle cx="17" cy="17" r="5" fill="none" stroke={A} strokeWidth="3" /></Teapot></span>
          <span className="ml-1.5 flex h-[19px] w-[18px] items-center justify-center">
            <Svg size={16}><path d="M1 1h22v22H1z" fill="#eee" /><path d="M22 2v20H2z" fill="#222" /><path d="M4 7h6M7 4v6" stroke="#222" strokeWidth="1.500" /><path d="M14 18h6" stroke="#eee" strokeWidth="2" /></Svg>
          </span>
        </div>
        <div className="mr-0.5 w-28 bg-[#505050] px-1.5 pt-1.5">
          <button className="mb-2 block h-[22px] w-full rounded-xs bg-[#606060]">渲染</button>
          <Select label="渲染模式" value="产品级" className="h-[19px] w-[101px]" />
        </div>
      </div>
      <div className="flex h-8 items-center border-b border-black pt-px pl-[3px]">
        <div className="flex w-[180px] gap-2">
          <Save size={15} color={L} strokeWidth={2.5} />
          <Svg size={14}><path d="M1 1h8v3H6v14H1zM8 6h9l6 6v11H8z" fill={L} /><path d="M16 6v7h7" stroke="#444" /></Svg>
          <Svg size={15}><path d="M1 2h16v12H1z" fill={T} /><path d="M1 2h16v3H1z" fill={L} /><path d="M6 10h17v13H6z" fill={T} stroke="#444" /><path d="M6 10h17v3H6z" fill={L} /></Svg>
          <Printer size={15} color={L} strokeWidth={2.5} />
          <X size={16} color={L} strokeWidth={3} />
        </div>
        <div className="flex h-6 items-start gap-0.5">
          <button aria-label="红" className={channel}><i className="h-3 w-3 rounded-full bg-[#e8151c]" /></button>
          <button aria-label="绿" className={channel}><i className="h-3 w-3 rounded-full bg-[#21a038]" /></button>
          <button aria-label="蓝" className={channel}><i className="h-3 w-3 rounded-full bg-[#00aeef]" /></button>
          <button aria-label="Alpha" className="mt-1 ml-0.5 flex h-3.5 w-3.5 items-center justify-center border border-[#ddd] bg-[#222]"><i className="h-2 w-2 rounded-full bg-[#ddd]" /></button>
          <button aria-label="单色" className="mt-1.5 ml-2 h-2.5 w-2.5 rounded-full bg-[#ddd]" />
          <i className="ml-3 h-full w-5 bg-white" />
          <Select label="通道显示" value="RGB Alpha" className="ml-3 h-5 w-[106px]" textClass="text-[11px]" />
          <span className="ml-3 flex h-full w-5 items-start justify-center bg-white pt-1"><Svg size={16}><path d="M3 2h18v13H3z" stroke="#222" strokeWidth="2" /><circle cx="15" cy="18" r="5" fill={A} stroke="#333" /></Svg></span>
          <span className="flex h-full w-5 items-start justify-center bg-white pt-1"><Svg size={16}><path d="M1 1h22v5H1zM1 8h22v12H1z" fill="#999" /><circle cx="14" cy="18" r="5" fill={A} stroke="#333" /></Svg></span>
        </div>
      </div>
      <div className="flex-1 bg-[#808080] pt-2 pr-2.5 pb-0.5 pl-[18px]">
        <div className="h-full bg-black" />
      </div>
    </section>
  );
}

// Latin runs are set in a monospace face one size down so they pair with the CJK glyphs
function LogLine({ text }) {
  return (
    <p className="h-[15px] shrink-0">
      {text.split(/([\x20-\x7e]+)/).map((part, i) =>
        i % 2 ? <span key={i} className="font-['Liberation_Mono',monospace] text-[10px] leading-none">{part}</span> : part
      )}
    </p>
  );
}

function MessageWindow() {
  return (
    <section className="absolute top-[368px] left-[636px] w-[647px] bg-[#444] shadow-[0_0_8px_#111]">
      <WindowTitle title="渲染消息: ART 渲染器" />
      <div className="flex h-[31px] items-start pr-[9px] pl-2 text-white">
        <div className="mt-2 flex w-[247px] shrink-0 border-b border-black pl-0.5 text-[12px] whitespace-nowrap">
          <button className="h-[17px] rounded-t-sm border border-b-0 border-black px-[5px] leading-4">产品级</button>
          <button className="h-[17px] rounded-t-sm border border-b-0 border-black px-[5px] leading-4">材质编辑器</button>
          <button className="h-[17px] rounded-t-sm border border-b-0 border-black px-[5px] leading-4">活动的明暗处理</button>
        </div>
        <span className="mt-px ml-auto text-[11px] text-[#eee]">ART 渲染器</span>
      </div>
      <div className="mr-[9px] ml-2 flex h-[235px] border-2 border-t-[#777] border-r-white border-b-white border-l-[#777] bg-[#bfc9d5]">
        <div
          role="log"
          className="flex min-w-0 flex-1 flex-col justify-end overflow-hidden pb-[13px] pl-px font-['Noto_Sans_CJK_SC',sans-serif] text-[11px] leading-[15px] whitespace-pre text-[#e01020]"
        >
          {LOG.map((line, i) => <LogLine key={i} text={line} />)}
        </div>
        <div className="flex w-[17px] flex-col items-center bg-[#f0f0f0]">
          <button aria-label="向上滚动" className="flex h-[18px] items-center"><Svg size={10}><path d="M2 17L12 6l10 11" stroke="#444" strokeWidth="4" /></Svg></button>
          <span className="flex-1" />
          <i className="h-[123px] w-[15px] bg-[#cdcdcd]" />
          <button aria-label="向下滚动" className="flex h-[18px] items-center"><Svg size={10}><path d="M2 7l10 11L22 7" stroke="#444" strokeWidth="4" /></Svg></button>
        </div>
      </div>
      <div className="flex h-10 items-center gap-[5px] pr-2.5 pl-[9px] text-[11px] text-[#e4e4e4]">
        <label className="flex flex-1 items-center gap-1 text-white">
          <span className="relative flex h-2.5 w-2.5">
            <input type="checkbox" defaultChecked className="h-2.5 w-2.5 appearance-none bg-[#666]" />
            <svg viewBox="0 0 10 10" className="pointer-events-none absolute inset-0" fill="none"><path d="M1 5l3 3 5-7" stroke="#fff" strokeWidth="2" /></svg>
          </span>
          出错时打开
        </label>
        <button className="h-[18px] w-[73px] rounded-xs bg-[#616161]">清除</button>
        <button className="h-[18px] w-[73px] rounded-xs bg-[#616161]">关闭</button>
      </div>
    </section>
  );
}

/* ---------- footer ---------- */

function Coord({ axis, value }) {
  return (
    <label className="flex items-center gap-1 font-bold">
      {axis}:
      <input defaultValue={value} className="h-[18px] w-[57px] bg-[#595959] px-0.5 text-[12px] font-normal text-[#888] outline-none" />
    </label>
  );
}

function StatusBar() {
  return (
    <div className="flex h-[51px] shrink-0 bg-[#444] text-[11px] text-[#e4e4e4]">
      <div className="flex w-[105px] shrink-0 flex-col gap-0.5 border-r border-black py-[3px] pr-1.5 pl-0.5">
        <div className="h-[22px] border-t border-l border-[#999] bg-[#dcc2c2]" />
        <div className="h-[22px] border-t border-l border-[#666] bg-white pl-1 font-['Liberation_Mono','Noto_Sans_CJK_SC',monospace] text-[11px] leading-5 whitespace-nowrap text-black">欢迎使用 MAXScr</div>
      </div>
      <div className="flex w-[923px] shrink-0 flex-col pt-2 pl-1 leading-4">
        <p className="h-[25px]">未选定任何对象</p>
        <p>渲染时间&nbsp; 0:00:04</p>
      </div>
      <div className="flex w-[398px] shrink-0 flex-col">
        <div className="flex h-[30px] items-center pr-2">
          <Svg size={17}><path d="M7 7h10v10H7z" stroke="#222" strokeWidth="2" /><path d="M1 6V1h5M18 1h5v5M23 18v5h-5M6 23H1v-5" stroke="#222" strokeWidth="2" /></Svg>
          <span className="ml-3"><Padlock size={15} fill="#262626" hole="#555" /></span>
          <span className="mr-2 ml-3"><Svg size={15}><path d="M1 1h22v22H1z" stroke={L} strokeWidth="3" /><circle cx="12" cy="12" r="6" stroke={L} strokeWidth="3" /><path d="M12 0v8M12 16v8M0 12h8M16 12h8" stroke={L} strokeWidth="3" /></Svg></span>
          <div className="flex gap-2.5">
            <Coord axis="X" value="320.637" />
            <Coord axis="Y" value="223.697" />
            <Coord axis="Z" value="0.0" />
          </div>
          <span className="ml-auto whitespace-nowrap text-white">栅格 = 10.0</span>
        </div>
        <div className="flex h-[21px] items-center justify-end">
          <i className="h-4 w-px bg-black" />
          <Box size={13} className="mr-3 ml-1" />
          <button>添加时间标记</button>
        </div>
      </div>
    </div>
  );
}

function Task({ label, on, active, children }) {
  return (
    <button
      aria-label={label}
      className={clsx('flex h-full w-[49px] items-center justify-center', active && 'bg-[#5d5d4b]')}
    >
      <span className={clsx('flex h-full items-center justify-center border-y-2 border-transparent', active ? 'w-full' : 'w-10', (on || active) && 'border-b-[#76b9ed]')}>
        {children}
      </span>
    </button>
  );
}

function Taskbar() {
  return (
    <div className="flex h-10 shrink-0 bg-[#353521]">
      <button aria-label="开始" className="flex w-12 shrink-0 items-center justify-center bg-[#1a2220]">
        <Svg size={17}><path d="M0 3.500l10-1.500v9.500H0zM11.500 1.800L24 0v11.500H11.500zM0 12.800h10v9.400l-10-1.500zM11.500 12.800H24V24l-12.500-1.800z" fill="#fff" /></Svg>
      </button>
      <label className="flex w-[344px] shrink-0 items-center gap-[11px] border border-[#ccc] bg-[#f2f2f2] pl-[11px] text-[#222]">
        <Search size={17} strokeWidth={1.8} className="-scale-x-100" />
        <input aria-label="搜索内容" placeholder="在这里输入你要搜索的内容" className="w-64 bg-transparent text-[14px] outline-none placeholder:text-[#333]" />
      </label>
      <div className="flex">
        <Task label="Cortana"><i className="h-[15px] w-[15px] rounded-full border-2 border-white" /></Task>
        <Task label="任务视图"><Svg size={18}><path d="M2 1v4h13V1M2 23v-4h13v4M2 8h13v8H2zM20 1v5M20 14v9" stroke="#fff" strokeWidth="1.500" /><path d="M18.500 8h3v4h-3z" fill="#fff" /></Svg></Task>
        <Task label="Edge">
          <Svg size={26}>
            <circle cx="12" cy="12" r="11" fill="#0f6cbd" />
            <path d="M1 11C2 4 8 1 13 1c7 0 11 6 10 10-1 5-7 5-9 3 2-3 0-6-4-6-5 0-8 2-9 3z" fill="#35c1b1" />
            <path d="M16 2c5 2 8 6 7 10-1 4-6 4-9 2 4-2 5-8 2-12z" fill="#5fd65a" />
            <path d="M10 10c-4 5 0 11 6 11 3 0 5-1 6-3-4 2-10 0-9-6z" fill="#0a3f86" />
          </Svg>
        </Task>
        <Task label="文件资源管理器" on><Svg size={23}><path d="M1 3h8l2 2h12v16H1z" fill="#f5c342" /><path d="M1 8h22v13H1z" fill="#fcdc7c" /><path d="M5 22v-8h14v8h-4v-4H9v4z" fill="#2f8fd8" /></Svg></Task>
        <Task label="截图工具"><Svg size={24}><path d="M1 9c0 7 5 9 10 9s10-2 10-9" fill="#b09898" /><ellipse cx="11" cy="8" rx="10" ry="7" fill="#f2efee" stroke="#c04545" strokeWidth="1.500" /><path d="M12 4l5 13M7 9l12 6" stroke="#667" strokeWidth="1.500" /><circle cx="15" cy="20" r="2.500" stroke="#2d8fc4" strokeWidth="2" /><circle cx="21" cy="17" r="2" stroke="#2d8fc4" strokeWidth="2" /></Svg></Task>
        <Task label="画图" on><Svg size={24}><path d="M11 4c7 0 11 4 10 9s-6 10-12 9-9-5-8-10 5-8 10-8z" fill="#d9e8f3" /><circle cx="6" cy="13" r="2" fill="#d33" /><circle cx="9" cy="8" r="2" fill="#3a9d3a" /><circle cx="10" cy="16" r="2" fill="#222" /><circle cx="16" cy="16" r="2" fill="#2d7fd0" /><path d="M20 7l-6 8-3 6 1-7 6-8z" fill="#f2a33a" /><path d="M18 1h5v5l-3 2-2-2z" fill="#b98c5c" /></Svg></Task>
        <Task label="Firefox"><Svg size={25}><path d="M12 23C5 23 1 18 1 12c0-4 2-6 3-9l3 4c1-2 2-5 6-7 0 3 5 4 7 6 2 1 3 4 3 7 0 6-5 10-11 10z" fill="#ff7a1a" /><path d="M14 1c1 4 7 5 8 11-2-4-5-4-7-5z" fill="#ffd43a" /><path d="M1 12c0 7 5 11 11 11 4 0 8-2 10-6-5 4-16 4-21-5z" fill="#f0304a" /><circle cx="12" cy="13" r="5.500" fill="#7a42d8" /><path d="M7 11c3-1 4 2 8 1-1 4-6 5-8-1z" fill="#ffb02e" /></Svg></Task>
        <Task label="看图软件" on><Svg size={24}><path d="M0 0h24v24H0z" fill="#5b7cc4" /><path d="M3 3h18v18H3z" fill="#f4f6fb" /><path d="M4 13c5-1 9-4 10-9" stroke="#3466c0" strokeWidth="3" /><path d="M6 20c8-1 13-5 15-12" stroke="#f09a1a" strokeWidth="3" /></Svg></Task>
        <Task label="3ds Max" active>
          <span className="flex h-6 w-6 items-center justify-center bg-[#d3ecea] font-['Liberation_Sans',sans-serif] text-[22px] leading-none font-bold text-[#128387]">3</span>
        </Task>
        <Task label="录屏" on>
          <Svg size={26}><rect x="1" y="0" width="22" height="22" rx="3" fill="#fff" /><path d="M8 1l7 2c4 2 4 5 0 7l-7 3V9l4-3-4-2z" fill="#ef2b67" /><path d="M7 4l5 2-5 3z" fill="#20b4e8" /><path d="M4 15l2 2 2-2M6 17v4" stroke="#ef2b67" strokeWidth="1.500" /><rect x="12" y="12" width="12" height="12" rx="2" fill="#bfe6fb" stroke="#3b9bd6" /><path d="M16 15v6M20 15v6" stroke="#1a78bd" strokeWidth="2" /></Svg>
        </Task>
      </div>
    </div>
  );
}

function SiteBadge() {
  return (
    <div className="absolute right-[15px] bottom-0 flex h-[233px] w-[466px] items-center bg-white pb-0.5 pl-10">
      <svg width="130" height="104" viewBox="0 0 130 104" fill="none" className="shrink-0">
        <path d="M10 64l21-10v27q-14-5-21-17z" fill="#174396" />
        <path d="M41 29l21-10v64H41z" fill="#174396" />
        <path d="M65 22l21 11v14l-10 4v32H65z" fill="#dcdcdc" />
        <path d="M76 53l18-11v33l-18 8z" fill="#174396" />
        <path d="M98 46l14 7-14 17z" fill="#dcdcdc" />
        <path d="M10 46C24 20 60 2 88 3c30 1 44 20 33 43C126 26 112 13 88 12 58 11 30 24 10 46z" fill="#8dbb24" />
        <path d="M7 54C-4 86 14 102 42 102c40-2 74-28 83-58-18 28-46 46-80 47C18 90 4 78 7 54z" fill="#174396" />
      </svg>
      <div className="-ml-1 text-black">
        <p className="pt-1.5 font-['Noto_Sans_CJK_SC',sans-serif] text-[50px] leading-[46px] font-black whitespace-nowrap italic [-webkit-text-stroke:1px_black]">土木工程网</p>
        <p className="pl-0.5 font-['Open_Sans',sans-serif] text-[33px] leading-8 font-semibold italic">www.civilcn.com</p>
      </div>
    </div>
  );
}

export default function App() {
  return (
    <div className="relative flex h-screen flex-col overflow-hidden bg-white pb-0.5 font-['Noto_Sans','Noto_Sans_CJK_SC',sans-serif]">
      <header className="flex shrink-0 bg-[#444]">
        <button aria-label="应用程序" className="flex h-[41px] w-10 shrink-0 flex-col items-center border border-black bg-linear-to-b from-[#8c8c8c] to-[#bcbcbc]">
          <span className="flex items-center gap-1 pl-2">
            <span className="font-['Liberation_Sans',sans-serif] text-[25px] leading-7 font-bold text-[#128e90]">3</span>
            <Down />
          </span>
          <span className="text-[8px] leading-[11px] font-black text-black">MAX</span>
        </button>
        <div className="min-w-0 flex-1">
          <TitleBar />
          <nav className="flex h-[21px] items-center border-t border-[#333] bg-linear-to-b from-[#a0a0a0] to-[#525252] pl-[15px] text-[12px] text-white">
            {MENUS.map(([m, w]) => <button key={m} className={clsx('shrink-0 text-left whitespace-nowrap', w)}>{m}</button>)}
          </nav>
        </div>
      </header>
      <MainToolbar />
      <Ribbon />
      <main className="flex min-h-0 flex-1">
        <div className="flex w-[41px] shrink-0 flex-col items-end justify-end border-t-2 border-[#222] bg-[#333]">
          <button aria-label="播放" className="mr-3 mb-[11px] flex h-[19px] w-[19px] items-center justify-center rounded-xs bg-[#555]">
            <i className="border-y-4 border-l-[6px] border-y-transparent border-l-white" />
          </button>
          <button aria-label="视口布局" className="mb-px h-11 w-[37px] rounded-sm bg-linear-to-b from-[#4f6786] to-[#3f82dc] px-[3px] py-1.5">
            <span className="block h-full border-2 border-[#3a4f70] bg-[#5e6a76]" />
          </button>
        </div>
        <SceneExplorer />
        <div className="flex min-w-0 flex-1 flex-col bg-[#444] pl-px">
          <Viewport />
          <Timeline />
        </div>
        <CommandPanel />
      </main>
      <StatusBar />
      <Taskbar />
      <RenderWindow />
      <MessageWindow />
      <SiteBadge />
    </div>
  );
}
